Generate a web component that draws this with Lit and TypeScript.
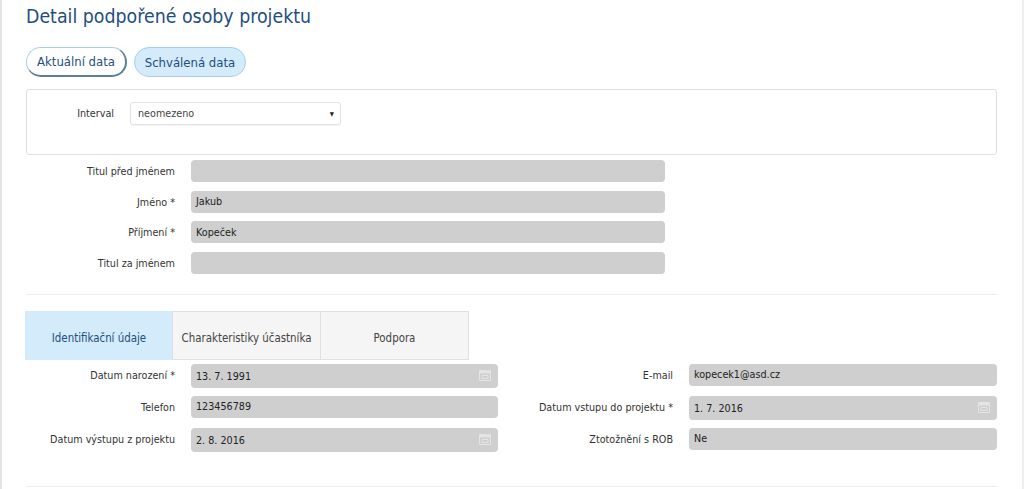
import { LitElement, html, css } from "lit";
import { customElement } from "lit/decorators.js";

const calendar = html`<svg class="cal" width="12" height="12" viewBox="0 0 12 12" aria-hidden="true">
  <path d="M.5 1.5h11v10H.5z" fill="none" stroke="#e4e4e4"/>
  <path d="M1 2h10v2.5H1z" fill="#e4e4e4"/>
  <path d="M3 6.5h6v3H3z" fill="none" stroke="#e4e4e4"/>
</svg>`;

type Field = { label: string; value: string; date?: boolean };

@customElement("app-root")
export class AppRoot extends LitElement {
  static styles = css`
    :host {
      display: block;
      width: 1024px;
      height: 489px;
      overflow: hidden;
      box-sizing: border-box;
      background: #fff;
      border-left: 2px solid #e4e4e4;
      border-right: 2px solid #f0f0f0;
      font-family: "DejaVu Sans", Tahoma, sans-serif;
      font-stretch: condensed;
      font-size: 10.7px;
      color: #333;
    }
    .page { padding: 0 25px 0 24px; }
    h1 {
      margin: 0;
      padding-top: 6px;
      height: 47px;
      box-sizing: border-box;
      font-size: 19.35px;
      line-height: 22px;
      font-weight: 400;
      color: #1f4e7f;
    }
    .pills { display: flex; gap: 7px; height: 42px; }
    .pill {
      box-sizing: border-box;
      height: 30px;
      border-radius: 15px;
      border: 1px solid #a9cfe6;
      display: flex;
      align-items: center;
      justify-content: center;
      font-size: 13px;
      color: #1f4e7f;
      background: #fff;
    }
    .pill.a { width: 101px; border-bottom: 2px solid #5c7f99; border-right: 2px solid #5c7f99; }
    .pill.b { width: 112px; background: #d3ebfa; }
    .panel {
      box-sizing: border-box;
      height: 66px;
      border: 1px solid #dfdfdf;
      border-radius: 3px;
      padding-top: 12px;
      display: flex;
      align-items: flex-start;
    }
    .panel label { width: 87px; text-align: right; line-height: 24px; }
    .select {
      box-sizing: border-box;
      margin-left: 16px;
      width: 211px;
      height: 23px;
      border: 1px solid #e2e2e2;
      border-radius: 3px;
      padding: 0 6px 0 7px;
      display: flex;
      align-items: center;
      justify-content: space-between;
      color: #444;
      box-shadow: 0 1px 1px rgba(0,0,0,.05);
    }
    .arrow { font-size: 6px; color: #222; }
    .names {
      display: grid;
      grid-template-columns: 149px 474px;
      column-gap: 16px;
      row-gap: 8.6px;
      padding-top: 5px;
      align-items: center;
    }
    .lbl { text-align: right; white-space: nowrap; line-height: 24px; height: 22px; }
    .input {
      box-sizing: border-box;
      background: #cfcfcf;
      border-radius: 4px;
      padding: 0 5px;
      display: flex;
      align-items: center;
      justify-content: space-between;
      color: #222;
      height: 22px;
    }
    hr { border: 0; border-top: 1px solid #eee; margin: 0; }
    .names + hr { margin-top: 20px; }
    .tabs { display: flex; margin: 16px 0 4px -1px; }
    .tab {
      box-sizing: border-box;
      width: 149px;
      height: 49px;
      border: 1px solid #e0e0e0;
      margin-left: -1px;
      background: #f5f5f5;
      display: flex;
      align-items: center;
      justify-content: center;
      white-space: nowrap;
      color: #444;
      font-size: 11.4px;
      padding-top: 5px;
    }
    .tab:first-child { margin-left: 0; width: 148px; }
    .tab.on { background: #d3ebfa; color: #1f4e7f; border-color: #d3ebfa; }
    .details {
      display: grid;
      grid-template-columns: 149px 323px 175px 324px;
      row-gap: 8px;
      grid-auto-rows: 24px;
      align-items: start;
    }
    .details .input { margin-left: 16px; }
    .details .input.date { height: 24px; padding-top: 2px; }
    .last { margin-top: 34px; }
    .cal { flex: none; margin: -3px 2px 0 0; }
  `;

  private names: Field[] = [
    { label: "Titul před jménem", value: "" },
    { label: "Jméno *", value: "Jakub" },
    { label: "Příjmení *", value: "Kopeček" },
    { label: "Titul za jménem", value: "" },
  ];

  private rows: [Field, Field][] = [
    [{ label: "Datum narození *", value: "13. 7. 1991", date: true }, { label: "E-mail", value: "kopecek1@asd.cz" }],
    [{ label: "Telefon", value: "123456789" }, { label: "Datum vstupu do projektu *", value: "1. 7. 2016", date: true }],
    [{ label: "Datum výstupu z projektu", value: "2. 8. 2016", date: true }, { label: "Ztotožnění s ROB", value: "Ne" }],
  ];

  private cell(f: Field) {
    return html`<div class="lbl">${f.label}</div>
      <div class=${f.date ? "input date" : "input"}><span>${f.value}</span>${f.date ? calendar : ""}</div>`;
  }

  render() {
    return html`<div class="page">
      <h1>Detail podpořené osoby projektu</h1>
      <div class="pills">
        <div class="pill a">Aktuální data</div>
        <div class="pill b">Schválená data</div>
      </div>
      <div class="panel">
        <label>Interval</label>
        <div class="select"><span>neomezeno</span><span class="arrow">▼</span></div>
      </div>
      <div class="names">
        ${this.names.map(
          (f) => html`<div class="lbl">${f.label}</div><div class="input">${f.value}</div>`
        )}
      </div>
      <hr />
      <div class="tabs">
        <div class="tab on">Identifikační údaje</div>
        <div class="tab">Charakteristiky účastníka</div>
        <div class="tab">Podpora</div>
      </div>
      <div class="details">
        ${this.rows.map(([l, r]) => html`${this.cell(l)}${this.cell(r)}`)}
      </div>
      <hr class="last" />
    </div>`;
  }
}
